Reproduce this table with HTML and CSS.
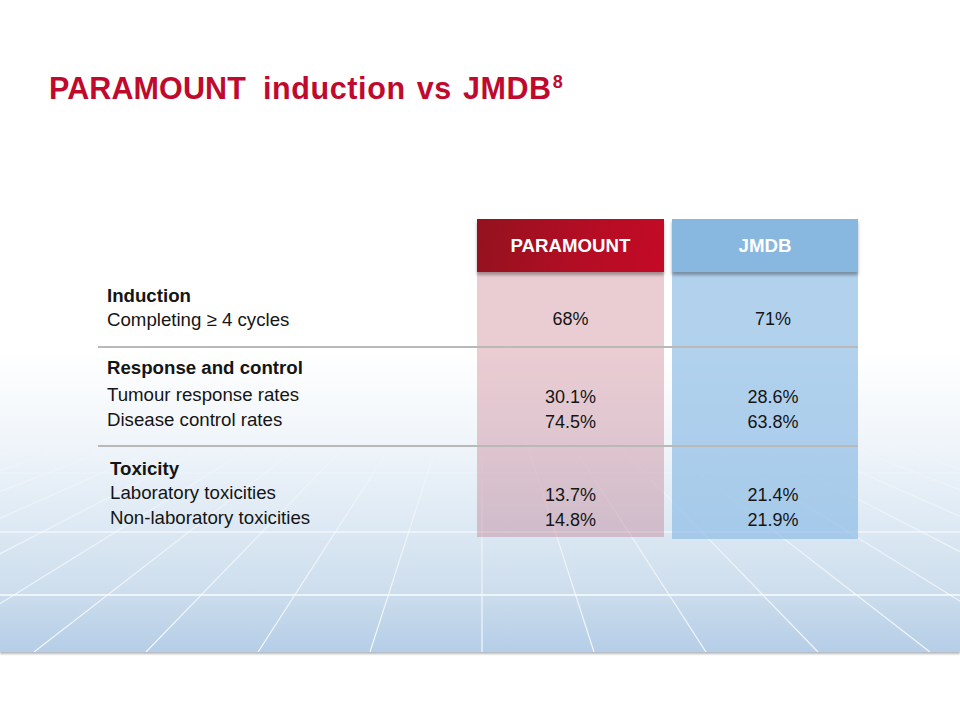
FILE: index.html
```html
<!DOCTYPE html>
<html lang="en">
<head>
<meta charset="utf-8">
<title>PARAMOUNT induction vs JMDB</title>
<link rel="stylesheet" href="styles.css">
</head>
<body>
<div class="slide">
  <div class="backdrop" aria-hidden="true">
    <svg class="grid" width="960" height="652" viewBox="0 0 960 652">
      <defs>
        <linearGradient id="fade" gradientUnits="userSpaceOnUse" x1="0" y1="420" x2="0" y2="652">
          <stop offset="0" stop-color="#ffffff" stop-opacity="0"/>
          <stop offset="0.3" stop-color="#ffffff" stop-opacity="0.3"/>
          <stop offset="0.6" stop-color="#ffffff" stop-opacity="0.6"/>
          <stop offset="1" stop-color="#ffffff" stop-opacity="0.85"/>
        </linearGradient>
      </defs>
      <g stroke="url(#fade)" stroke-width="1.2" fill="none">
        <line x1="51.5" y1="400" x2="-1086" y2="652"/>
        <line x1="82.25" y1="400" x2="-974" y2="652"/>
        <line x1="113" y1="400" x2="-862" y2="652"/>
        <line x1="143.75" y1="400" x2="-750" y2="652"/>
        <line x1="174.5" y1="400" x2="-638" y2="652"/>
        <line x1="205.25" y1="400" x2="-526" y2="652"/>
        <line x1="236" y1="400" x2="-414" y2="652"/>
        <line x1="266.75" y1="400" x2="-302" y2="652"/>
        <line x1="297.5" y1="400" x2="-190" y2="652"/>
        <line x1="328.25" y1="400" x2="-78" y2="652"/>
        <line x1="359" y1="400" x2="34" y2="652"/>
        <line x1="389.75" y1="400" x2="146" y2="652"/>
        <line x1="420.5" y1="400" x2="258" y2="652"/>
        <line x1="451.25" y1="400" x2="370" y2="652"/>
        <line x1="482" y1="400" x2="482" y2="652"/>
        <line x1="512.75" y1="400" x2="594" y2="652"/>
        <line x1="543.5" y1="400" x2="706" y2="652"/>
        <line x1="574.25" y1="400" x2="818" y2="652"/>
        <line x1="605" y1="400" x2="930" y2="652"/>
        <line x1="635.75" y1="400" x2="1042" y2="652"/>
        <line x1="666.5" y1="400" x2="1154" y2="652"/>
        <line x1="697.25" y1="400" x2="1266" y2="652"/>
        <line x1="728" y1="400" x2="1378" y2="652"/>
        <line x1="758.75" y1="400" x2="1490" y2="652"/>
        <line x1="789.5" y1="400" x2="1602" y2="652"/>
        <line x1="820.25" y1="400" x2="1714" y2="652"/>
        <line x1="851" y1="400" x2="1826" y2="652"/>
        <line x1="881.75" y1="400" x2="1938" y2="652"/>
        <line x1="912.5" y1="400" x2="2050" y2="652"/>
        <line x1="0" y1="473" x2="960" y2="473"/>
        <line x1="0" y1="532" x2="960" y2="532" stroke-width="1.8"/>
        <line x1="0" y1="595" x2="960" y2="595" stroke-width="1.8"/>
      </g>
    </svg>
  </div>

  <h1 class="title"><span class="title-main">PARAMOUNT</span>&nbsp; <span class="title-rest">induction vs JMDB</span><sup>8</sup></h1>

  <div class="table">
    <div class="head head-para">PARAMOUNT</div>
    <div class="head head-jmdb">JMDB</div>
    <div class="col col-para"></div>
    <div class="col col-jmdb"></div>

    <div class="label row1">
      <div class="lead">Induction</div>
      <div>Completing ≥ 4 cycles</div>
    </div>
    <div class="val val-para row1">68%</div>
    <div class="val val-jmdb row1">71%</div>

    <div class="sep sep1"></div>

    <div class="label row2">
      <div class="lead">Response and control</div>
      <div>Tumour response rates</div>
      <div>Disease control rates</div>
    </div>
    <div class="val val-para row2"><div>30.1%</div><div>74.5%</div></div>
    <div class="val val-jmdb row2"><div>28.6%</div><div>63.8%</div></div>

    <div class="sep sep2"></div>

    <div class="label row3">
      <div class="lead">Toxicity</div>
      <div>Laboratory toxicities</div>
      <div>Non-laboratory toxicities</div>
    </div>
    <div class="val val-para row3"><div>13.7%</div><div>14.8%</div></div>
    <div class="val val-jmdb row3"><div>21.4%</div><div>21.9%</div></div>
  </div>
</div>
</body>
</html>
```

FILE: styles.css
```css
html, body {
  margin: 0;
  padding: 0;
  background: #ffffff;
}

.slide {
  position: relative;
  isolation: isolate;
  width: 960px;
  height: 720px;
  overflow: hidden;
  padding-top: 70px;
  box-sizing: border-box;
  font-family: "Liberation Sans", Arial, sans-serif;
  color: #151515;
}

.backdrop {
  position: absolute;
  left: 0;
  top: 0;
  width: 960px;
  height: 652px;
  z-index: -1;
  background: linear-gradient(to bottom,
    #ffffff 0px,
    #ffffff 350px,
    #f3f7fb 425px,
    #e3edf6 500px,
    #cfdfee 585px,
    #b6cee7 650px);
  box-shadow: 0 2px 2px rgba(90, 100, 110, 0.45);
}

.grid {
  display: block;
}

.title {
  margin: 0 0 0 49px;
  height: 36px;
  font-size: 30.5px;
  line-height: 36px;
  font-weight: bold;
  color: #bf0a2e;
  letter-spacing: 0.1px;
}

.title-rest {
  letter-spacing: 0.6px;
  word-spacing: 2px;
}

.title sup {
  font-size: 18px;
  line-height: 0;
  vertical-align: 11px;
  margin-left: 1px;
}

.table {
  margin: 113px 0 0 98px;
  width: 760px;
  display: grid;
  grid-template-columns: 371px 187px 186px;
  column-gap: 8px;
  grid-template-rows: 53px 74px 2px 97px 2px 91px;
  font-size: 18.67px;
  line-height: 25px;
}

.head {
  grid-row: 1;
  display: flex;
  align-items: center;
  justify-content: center;
  color: #ffffff;
  font-weight: bold;
  font-size: 18.67px;
  box-shadow: 0 3px 3px rgba(0, 0, 0, 0.32);
  position: relative;
  z-index: 2;
}

.head-para {
  grid-column: 2;
  background: linear-gradient(100deg, #93121f 0%, #b30d24 55%, #c40a26 100%);
}

.head-jmdb {
  grid-column: 3;
  background: #88b7e0;
}

.col {
  grid-row: 2 / 7;
}

.col-para {
  grid-column: 2;
  background: rgba(175, 60, 85, 0.26);
  margin-bottom: 1px;
}

.col-jmdb {
  grid-column: 3;
  background: rgba(140, 187, 228, 0.68);
  margin-bottom: -1px;
}

.label {
  grid-column: 1;
  padding-left: 9px;
}

.lead {
  font-weight: bold;
}

.row1 { grid-row: 2; }
.row2 { grid-row: 4; }
.row3 { grid-row: 6; }

.label.row1 { padding-top: 12px; line-height: 24px; }
.label.row2 { padding-top: 7px; }
.label.row2 .lead { margin-bottom: 2px; }
.label.row3 { padding-top: 9px; padding-left: 12px; }
.label.row3 .lead { margin-bottom: -1px; }

.val {
  text-align: center;
  font-size: 18px;
}

.val-para { grid-column: 2; }
.val-jmdb { grid-column: 3; padding-left: 16px; }

.val.row1 { padding-top: 35px; }
.val.row2 { padding-top: 37px; }
.val.row3 { padding-top: 36px; }

.sep {
  grid-column: 1 / -1;
  background: #b9b9b9;
  position: relative;
  z-index: 1;
}

.sep1 { grid-row: 3; }
.sep2 { grid-row: 5; }
```
